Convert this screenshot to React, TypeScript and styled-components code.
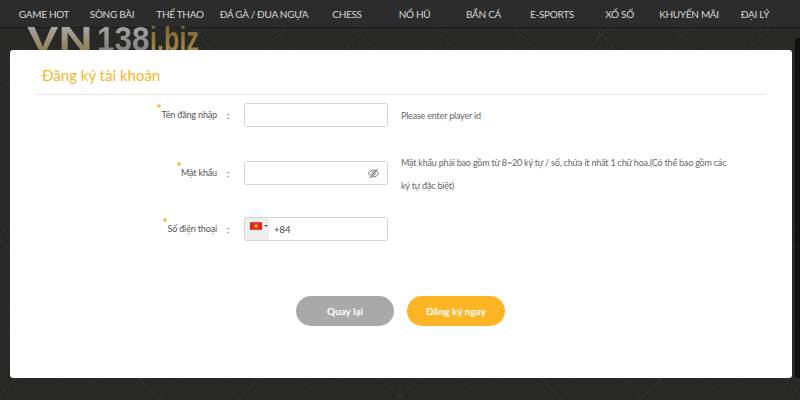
import React from 'react';
import styled, { createGlobalStyle } from 'styled-components';

const Global = createGlobalStyle`
  html, body { margin: 0; padding: 0; width: 800px; height: 400px; overflow: hidden; background: #262626; }
  * { box-sizing: border-box; }
`;

const Page = styled.div`
  width: 800px;
  height: 400px;
  overflow: hidden;
  display: flex;
  flex-direction: column;
  font-family: Lato, "Open Sans", "Liberation Sans", sans-serif;
  background-color: #282827;
  background-image:
    repeating-linear-gradient(45deg, transparent 0 56px, rgba(255,255,255,0.035) 56px 57px),
    repeating-linear-gradient(-45deg, transparent 0 56px, rgba(255,255,255,0.035) 56px 57px);
`;

const Nav = styled.nav`
  height: 28px;
  flex: none;
  display: grid;
  grid-template-columns: 68px 68px 68px 100px 66px 69px 69px 68px 67px 72px 60px;
  padding-left: 10px;
  align-items: center;
  background: #2c2c2c;
  border-bottom: 1px solid #1a1a1a;
`;

const NavItem = styled.a`
  text-align: center;
  font-size: 10px;
  letter-spacing: -0.3px;
  color: #d8d8d8;
  white-space: nowrap;
`;

const LogoRow = styled.div`
  height: 22px;
  flex: none;
  padding-left: 27px;
`;

const Logo = styled.div`
  display: flex;
  height: 26px;
  margin-top: -2px;
  font-family: "Liberation Sans", sans-serif;
  font-weight: 700;
  line-height: 26px;
  filter: blur(0.5px);
`;

const LogoPart = styled.span<{ $from: string; $to: string; $scale: number; $width: number }>`
  display: block;
  flex: none;
  font-size: 35px;
  width: ${p => p.$width / p.$scale}px;
  margin-right: ${p => p.$width - p.$width / p.$scale}px;
  transform: scaleX(${p => p.$scale});
  transform-origin: left center;
  background: linear-gradient(${p => p.$from}, ${p => p.$to});
  -webkit-background-clip: text;
  background-clip: text;
  color: transparent;
  white-space: nowrap;
`;

const Panel = styled.main`
  position: relative;
  z-index: 1;
  width: 782px;
  height: 328px;
  margin-left: 10px;
  flex: none;
  background: #fff;
  border-radius: 3px;
  padding: 0 26px;
`;

const Title = styled.h1`
  margin: 0;
  height: 45px;
  padding: 15px 0 0 6px;
  font-size: 15px;
  line-height: 20px;
  font-weight: 400;
  color: #f9b52b;
  border-bottom: 1px solid #e4e4e4;
`;

const Form = styled.div`
  display: flex;
  flex-direction: column;
  margin-left: -26px;
`;

const Row = styled.div<{ $top: number }>`
  height: 24px;
  margin-top: ${p => p.$top}px;
  display: grid;
  grid-template-columns: 207px 27px 144px 1fr;
  align-items: start;
`;

const Label = styled.label`
  justify-self: end;
  position: relative;
  font-size: 9px;
  letter-spacing: -0.15px;
  line-height: 24px;
  color: #555;
  white-space: nowrap;
`;

const Star = styled.i`
  position: absolute;
  left: -4px;
  top: 1px;
  width: 4px;
  height: 4px;
  border-radius: 50%;
  background: #f6c468;
`;

const Colon = styled.span`
  font-size: 10px;
  line-height: 24px;
  color: #555;
  padding-left: 10px;
`;

const Field = styled.div`
  width: 144px;
  height: 24px;
  display: flex;
  align-items: center;
  justify-content: flex-end;
  border: 1px solid #d5d5d5;
  border-radius: 2px;
  background: #fff;
  padding-right: 7px;
`;

const PhoneField = styled(Field)`
  justify-content: flex-start;
  padding-right: 0;
  font-size: 9.5px;
  color: #444;
`;

const FlagBox = styled.div`
  width: 24px;
  height: 22px;
  flex: none;
  background: #eeeeee;
  display: flex;
  align-items: flex-start;
  padding: 4px 0 0 5px;
  gap: 2px;
  margin-right: 5px;
`;

const Caret = styled.i`
  width: 0;
  height: 0;
  margin-top: 3px;
  border-left: 2px solid transparent;
  border-right: 2px solid transparent;
  border-top: 2px solid #555;
`;

const Hint = styled.p`
  margin: 1px 0 0;
  padding-left: 13px;
  width: 345px;
  font-size: 9px;
  letter-spacing: -0.2px;
  line-height: 23px;
  color: #666;
`;

const HintTwo = styled(Hint)`
  margin-top: -10px;
`;

const Actions = styled.div`
  display: flex;
  gap: 13px;
  margin: 55px 0 0 260px;
`;

const Button = styled.button<{ $bg: string }>`
  width: 98px;
  height: 30px;
  border: 0;
  border-radius: 15px;
  background: ${p => p.$bg};
  color: #fff;
  font-family: inherit;
  font-size: 10px;
  font-weight: 700;
  padding: 0;
`;

const Edge = styled.div`
  position: absolute;
  left: 795px;
  top: 38px;
  width: 5px;
  height: 340px;
  background: #111;
  border-radius: 4px 0 0 0;
`;

const navItems = ['GAME HOT', 'SÒNG BÀI', 'THỂ THAO', 'ĐÁ GÀ / ĐUA NGỰA', 'CHESS', 'NỔ HŨ', 'BẮN CÁ', 'E-SPORTS', 'XỔ SỐ', 'KHUYẾN MÃI', 'ĐẠI LÝ'];

export default function App() {
  return (
    <Page>
      <Global />
      <Nav>
        {navItems.map(n => <NavItem key={n}>{n}</NavItem>)}
      </Nav>
      <LogoRow>
        <Logo>
          <LogoPart $from="#a8a8a8" $to="#8f7c50" $scale={1.35} $width={70}>VN</LogoPart>
          <LogoPart $from="#a4a4a4" $to="#808080" $scale={0.9} $width={53}>138</LogoPart>
          <LogoPart $from="#7c6830" $to="#a58a48" $scale={0.72} $width={50}>i.biz</LogoPart>
        </Logo>
      </LogoRow>
      <Panel>
        <Title>Đăng ký tài khoản</Title>
        <Form>
          <Row $top={8}>
            <Label><Star />Tên đăng nhập</Label>
            <Colon>:</Colon>
            <Field />
            <Hint>Please enter player id</Hint>
          </Row>
          <Row $top={34}>
            <Label><Star />Mật khẩu</Label>
            <Colon>:</Colon>
            <Field>
              <svg width="13" height="13" viewBox="0 0 14 14" fill="none" stroke="#666" strokeWidth="1">
                <path d="M1.5 7C3 4.5 5 3.3 7 3.3S11 4.5 12.5 7C11 9.5 9 10.7 7 10.7S3 9.5 1.5 7Z" />
                <circle cx="7" cy="7" r="1.8" />
                <path d="M3 12L11.5 2" />
              </svg>
            </Field>
            <HintTwo>Mật khẩu phải bao gồm từ 8~20 ký tự / số, chứa ít nhất 1 chữ hoa.(Có thể bao gồm các ký tự đặc biệt)</HintTwo>
          </Row>
          <Row $top={32}>
            <Label><Star />Số điện thoại</Label>
            <Colon>:</Colon>
            <PhoneField>
              <FlagBox>
                <svg width="12" height="8" viewBox="0 0 11 7">
                  <rect width="11" height="7" fill="#e0281e" />
                  <path d="M5.5 1.2l.55 1.6h1.7l-1.37 1 .52 1.6-1.4-1-1.4 1 .52-1.6-1.37-1h1.7z" fill="#ffd83a" />
                </svg>
                <Caret />
              </FlagBox>
              +84
            </PhoneField>
          </Row>
        </Form>
        <Actions>
          <Button $bg="#a9a9a9">Quay lại</Button>
          <Button $bg="#fdb526">Đăng ký ngay</Button>
        </Actions>
      </Panel>
      <Edge />
    </Page>
  );
}
